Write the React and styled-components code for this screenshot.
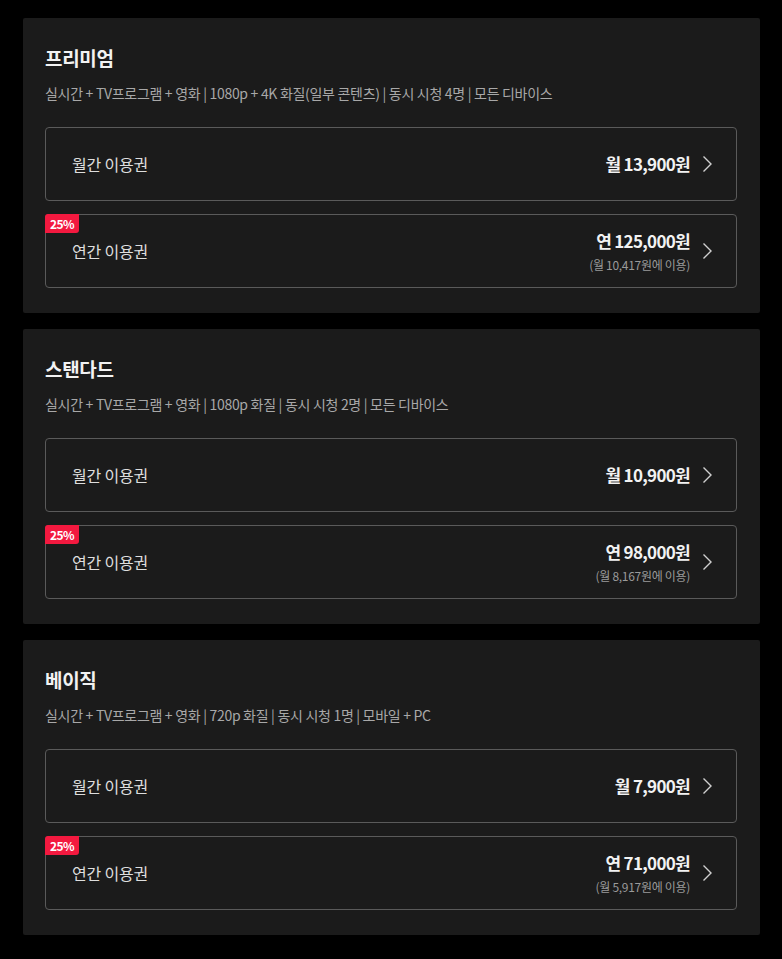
import React from 'react';
import styled, { createGlobalStyle } from 'styled-components';

const GlobalStyle = createGlobalStyle`
  body {
    margin: 0;
    background: #000000;
    font-family: "Noto Sans CJK KR", "Noto Sans", sans-serif;
    color: #e5e5e5;
  }
`;

const plans = [
  {
    name: '프리미엄',
    desc: '실시간 + TV프로그램 + 영화 | 1080p + 4K 화질(일부 콘텐츠) | 동시 시청 4명 | 모든 디바이스',
    monthly: '월 13,900원',
    yearly: '연 125,000원',
    perMonth: '(월 10,417원에 이용)',
  },
  {
    name: '스탠다드',
    desc: '실시간 + TV프로그램 + 영화 | 1080p 화질 | 동시 시청 2명 | 모든 디바이스',
    monthly: '월 10,900원',
    yearly: '연 98,000원',
    perMonth: '(월 8,167원에 이용)',
  },
  {
    name: '베이직',
    desc: '실시간 + TV프로그램 + 영화 | 720p 화질 | 동시 시청 1명 | 모바일 + PC',
    monthly: '월 7,900원',
    yearly: '연 71,000원',
    perMonth: '(월 5,917원에 이용)',
  },
];

function Chevron() {
  return (
    <svg width="10" height="18" viewBox="0 0 10 18" fill="none">
      <path d="M1.5 1.5l7.5 7.5-7.5 7.5" stroke="#d0d0d0" strokeWidth="1.4" />
    </svg>
  );
}

function App() {
  return (
    <>
      <GlobalStyle />
      <Page>
        {plans.map((p) => (
          <Card key={p.name}>
            <Title>{p.name}</Title>
            <Desc>{p.desc}</Desc>
            <Options>
              <Option>
                <Label>월간 이용권</Label>
                <Right>
                  <PriceBox>
                    <Price>{p.monthly}</Price>
                  </PriceBox>
                  <Chevron />
                </Right>
              </Option>
              <Option>
                <Badge>25%</Badge>
                <Label>연간 이용권</Label>
                <Right>
                  <PriceBox>
                    <Price>{p.yearly}</Price>
                    <SubPrice>{p.perMonth}</SubPrice>
                  </PriceBox>
                  <Chevron />
                </Right>
              </Option>
            </Options>
          </Card>
        ))}
      </Page>
    </>
  );
}

const Page = styled.div`
  display: flex;
  flex-direction: column;
  gap: 16px;
  padding: 18px 22px 24px 23px;
`;

const Card = styled.section`
  background: #1b1b1b;
  border-radius: 2px;
  padding: 26px 23px 25px 22px;
`;

const Title = styled.h2`
  margin: 0;
  font-size: 19px;
  line-height: 28px;
  font-weight: 700;
  color: #f2f2f2;
  letter-spacing: -0.3px;
`;

const Desc = styled.p`
  margin: 11px 0 0;
  font-size: 14px;
  line-height: 20px;
  color: #a8a8a8;
  letter-spacing: -0.3px;
`;

const Options = styled.div`
  display: flex;
  flex-direction: column;
  gap: 13px;
  margin-top: 24px;
`;

const Option = styled.div`
  position: relative;
  height: 74px;
  box-sizing: border-box;
  border: 1px solid #5a5a5a;
  border-radius: 4px;
  display: flex;
  align-items: center;
  justify-content: space-between;
  padding: 0 24px 0 26px;
`;

const Badge = styled.span`
  position: absolute;
  top: -1px;
  left: -1px;
  background: #f3193f;
  color: #fff;
  font-size: 12px;
  font-weight: 700;
  line-height: 19px;
  padding: 0 5px;
  border-radius: 3px 0 3px 0;
  letter-spacing: -0.6px;
`;

const Label = styled.span`
  font-size: 16px;
  color: #dedede;
  letter-spacing: -0.2px;
`;

const Right = styled.div`
  display: flex;
  align-items: center;
  gap: 12px;
`;

const PriceBox = styled.div`
  display: flex;
  flex-direction: column;
  align-items: flex-end;
`;

const Price = styled.span`
  font-size: 17px;
  font-weight: 700;
  color: #f2f2f2;
  line-height: 26px;
  letter-spacing: -0.7px;
`;

const SubPrice = styled.span`
  margin-top: 2px;
  font-size: 12px;
  color: #9a9a9a;
  line-height: 18px;
  letter-spacing: -0.3px;
`;

export default App;
